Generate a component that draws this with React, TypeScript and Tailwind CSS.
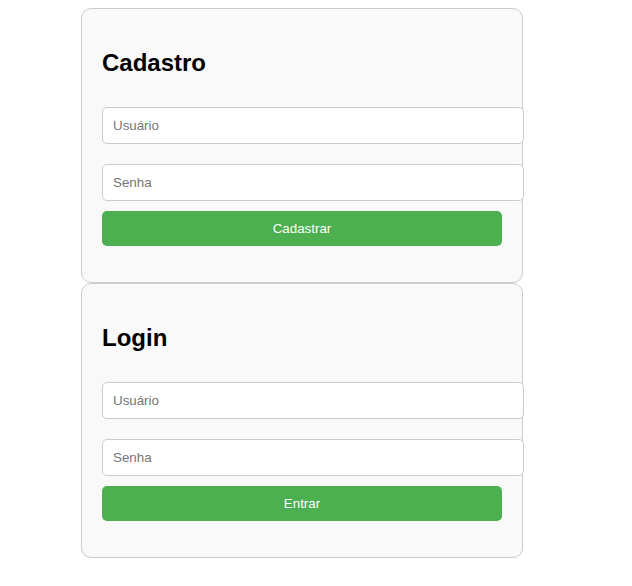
import React from 'react';

interface AuthCardProps {
  title: string;
  action: string;
}

const AuthCard: React.FC<AuthCardProps> = ({ title, action }) => {
  return (
    <section className="w-[442px] rounded-[10px] border border-[#ccc] bg-[#f9f9f9] p-5">
      <h2 className="my-5 text-2xl font-bold leading-[normal] text-black">{title}</h2>
      <div className="flex flex-col pb-4">
        <input
          type="text"
          placeholder="Usuário"
          className="my-[10px] w-[422px] rounded-[5px] border border-[#ccc] bg-white p-[10px] text-[13.333px] leading-[15px] outline-none placeholder:text-[#757575]"
        />
        <input
          type="password"
          placeholder="Senha"
          className="my-[10px] w-[422px] rounded-[5px] border border-[#ccc] bg-white p-[10px] text-[13.333px] leading-[15px] outline-none placeholder:text-[#757575]"
        />
        <button className="w-full rounded-[5px] bg-[#4caf50] p-[10px] text-[13.333px] leading-[15px] text-white">
          {action}
        </button>
      </div>
    </section>
  );
};

export default function App() {
  return (
    <div className="min-h-[586px] bg-white pl-[81px] pt-2 font-['Liberation_Sans',Arial,sans-serif]">
      <AuthCard title="Cadastro" action="Cadastrar" />
      <AuthCard title="Login" action="Entrar" />
    </div>
  );
}
